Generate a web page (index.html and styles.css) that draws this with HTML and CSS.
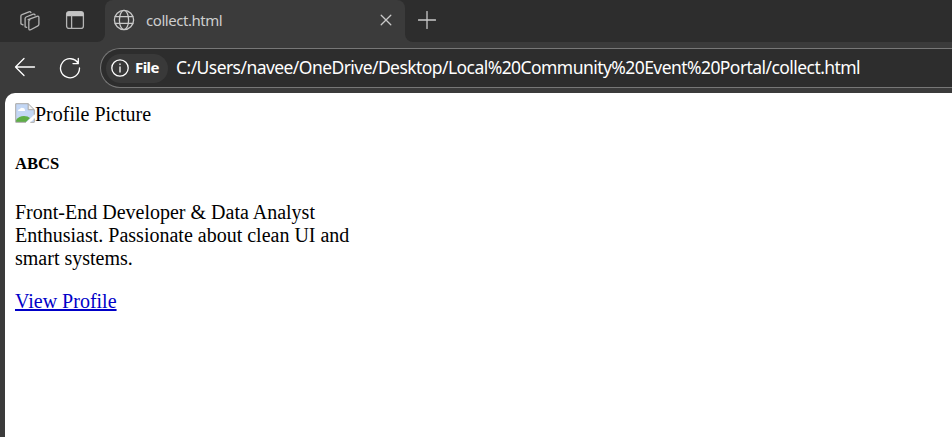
FILE: index.html
```html
<!DOCTYPE html>
<html lang="en">
<head>
<meta charset="utf-8">
<title>collect.html</title>
<link rel="stylesheet" href="styles.css">
</head>
<body>
<header class="tabstrip">
  <div class="strip-start">
    <svg class="workspaces" width="22" height="22" viewBox="0 0 22 22"><path d="M9.2 9.7 18 6.3q1.9-.6 1.9 1.2v6.8q0 1.1-1 1.6l-7.2 3.8q-1.9.8-1.9-1.1v-7q0-1.2 1-1.6"/><path d="M7.7 17.3 6.1 16.8V8.6q0-1.1 1-1.6l7.2-2.8q1.4-.4 1.8.8M4 14.9 1.9 13.8V6.1Q1.9 5 3 4.6l7-2.8q1.4-.4 1.9.8"/></svg>
    <svg class="vertical-tabs" width="20" height="20" viewBox="0 0 20 20"><rect x="1.6" y="1.6" width="16.8" height="16.8" rx="2.5"/><path class="fill" d="M1.5 6.3V4Q1.5 1.5 4 1.5h12q2.5 0 2.5 2.5v2.3z"/><path d="M6.6 6v12"/></svg>
  </div>
  <div class="tab">
    <svg class="globe" width="22" height="22" viewBox="0 0 22 22"><circle cx="11" cy="11" r="9.6"/><ellipse cx="11" cy="11" rx="4.6" ry="9.6"/><path d="M2.2 7.6h17.6M2.2 14.4h17.6"/></svg>
    <span class="tab-title">collect.html</span>
    <svg class="close" width="12" height="12" viewBox="0 0 12 12"><path d="m1.2 1.2 9.6 9.6m0-9.6-9.6 9.6"/></svg>
  </div>
  <div class="strip-end">
    <svg class="plus" width="18" height="18" viewBox="0 0 18 18"><path d="M9 .5v17M.5 9h17"/></svg>
  </div>
</header>
<nav class="toolbar">
  <svg class="back" width="22" height="20" viewBox="0 0 22 20"><path d="M10 1.5 1.5 10l8.5 8.5M1.5 10H20.5"/></svg>
  <svg class="reload" width="22" height="22" viewBox="0 0 22 22"><path d="M19.3 6.6A9.5 9.5 0 1 0 20.5 11M19.3 1.5v5.1h-5.3"/></svg>
  <div class="address">
    <div class="chip">
      <svg class="info" width="18" height="18" viewBox="0 0 18 18"><circle cx="9" cy="9" r="8.2"/><path d="M9 8v5M9 5v.6"/></svg>
      <span class="chip-label">File</span>
    </div>
    <span class="url">C:/Users/navee/OneDrive/Desktop/Local%20Community%20Event%20Portal/collect.html</span>
  </div>
</nav>
<main class="page">
  <div class="picture">
    <svg width="20" height="20" viewBox="0 0 20 20"><path fill="#c3d7f5" d="M1 1h12l6 6v12H1z"/><path fill="#fff" d="M3 8q0-2 2-2 1-2 3-1 2 0 2 3z"/><path fill="#5eae46" d="M1 19v-2q3-4 8-4 4 0 6 2l-4 4z"/><path fill="#fff" d="m10.5 20 9.5-9v4l-5 5z"/><path fill="#f5f5f5" d="M13 1v6h6z"/><path fill="none" stroke="#a6a6a6" d="M11 19.3H.7V.7h12.5l6.1 6v5M13.2.7v6h6.1M19.3 15.5v3.8h-4"/></svg><span>Profile Picture</span>
  </div>
  <h5>ABCS</h5>
  <p>Front-End Developer &amp; Data Analyst Enthusiast. Passionate about clean UI and smart systems.</p>
  <a href="#">View Profile</a>
</main>
</body>
</html>
```
FILE: styles.css
```css
* { box-sizing: border-box; }
body {
  margin: 0;
  height: 437px;
  overflow: hidden;
  display: flex;
  flex-direction: column;
  background: #3b3b3b;
  font-family: "Noto Sans", "Open Sans", sans-serif;
}
svg { display: block; flex: none; }
.tabstrip {
  display: flex;
  height: 42px;
  background: linear-gradient(#2d2d2d 0 20px, #3b3b3b 20px);
}
.strip-start, .strip-end { background: #2d2d2d; display: flex; }
.strip-start {
  width: 105px;
  border-bottom-right-radius: 8px;
  padding: 10px 0 0 19px;
  gap: 24px;
}
.strip-end {
  flex: 1;
  border-bottom-left-radius: 8px;
  padding: 11px 0 0 13px;
}
.tab {
  width: 300px;
  height: 42px;
  display: flex;
  align-items: center;
  padding: 0 13px 2px 8px;
  background: #3b3b3b;
  border-radius: 8px 8px 0 0;
}
.workspaces, .vertical-tabs, .globe, .close, .plus, .back, .reload, .info {
  fill: none;
  stroke: #c9c9c9;
  stroke-width: 1.3;
  stroke-linecap: round;
  stroke-linejoin: round;
}
.workspaces, .vertical-tabs { stroke: #b5b5b5; }
.vertical-tabs .fill { fill: #c4c4c4; stroke: none; }
.tab-title {
  margin-left: 11px;
  padding-bottom: 1px;
  flex: 1;
  color: #cecece;
  font-size: 15px;
  line-height: 20px;
  letter-spacing: -0.45px;
}
.toolbar { height: 51px; display: flex; padding-left: 14px; flex: none; }
.back { margin-top: 15px; stroke: #fff; }
.reload { margin: 15px 0 0 23px; stroke: #fff; }
.address {
  margin: 6px -2px 0 19px;
  flex: 1;
  height: 40px;
  border: 1px solid #777;
  border-right: 0;
  border-radius: 20px 0 0 20px;
  background: #2d2d2d;
  display: flex;
  align-items: center;
  padding-left: 5px;
}
.chip {
  width: 62px;
  height: 29px;
  border-radius: 15px;
  background: #393939;
  display: flex;
  align-items: center;
  padding-left: 5px;
  gap: 6px;
}
.info { stroke: #fff; }
.chip-label { color: #fff; font-size: 15px; font-weight: 700; letter-spacing: -0.6px; padding-bottom: 2px; }
.url {
  margin-left: 8px;
  padding-bottom: 2px;
  color: #fff;
  font-size: 17.5px;
  letter-spacing: -0.56px;
  white-space: nowrap;
}
.page {
  flex: 1;
  margin-left: 5px;
  padding: 10px;
  background: #fff;
  border-top-left-radius: 10px;
  color: #000;
  font: 20px/23px "Liberation Serif", serif;
}
.picture { display: flex; height: 23px; }
h5 { margin: 28px 0; font-size: 16.6px; line-height: 19px; }
p { width: 345px; margin: 0 0 20px; }
a { color: #0000c8; text-decoration: underline; }
```
